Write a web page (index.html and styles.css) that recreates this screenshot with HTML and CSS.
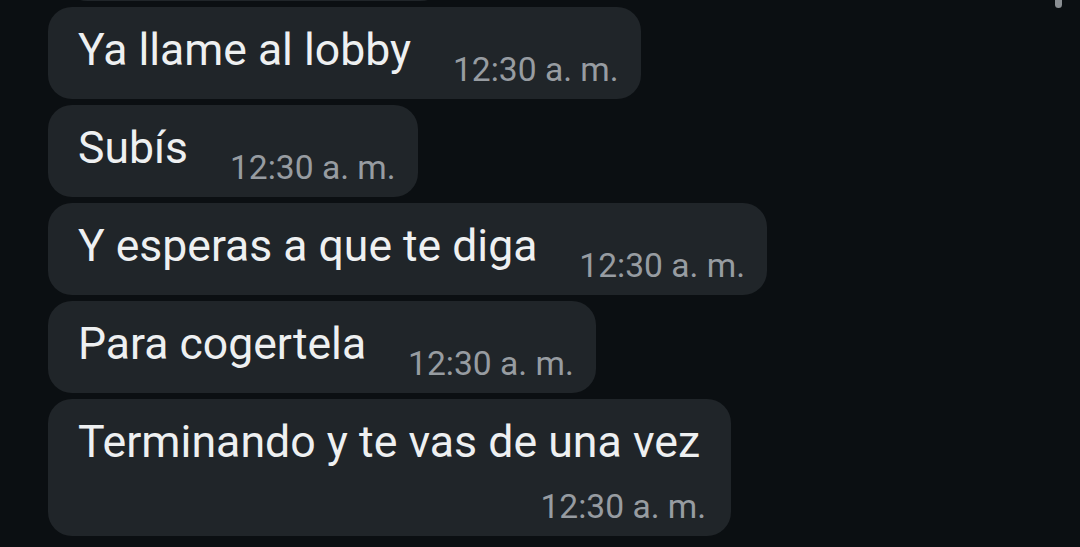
FILE: index.html
```html
<!DOCTYPE html>
<html lang="es">
<head>
  <meta charset="UTF-8">
  <meta name="viewport" content="width=device-width, initial-scale=1.0">
  <title>Chat</title>
  <link rel="stylesheet" href="styles.css">
</head>
<body>
  <div class="scroll-thumb"></div>

  <div class="chat">
    <div class="bubble bubble-cut"></div>

    <div class="bubble">
      <span class="msg">Ya llame al lobby</span>
      <span class="time">12:30 a. m.</span>
    </div>

    <div class="bubble">
      <span class="msg">Subís</span>
      <span class="time">12:30 a. m.</span>
    </div>

    <div class="bubble">
      <span class="msg">Y esperas a que te diga</span>
      <span class="time">12:30 a. m.</span>
    </div>

    <div class="bubble">
      <span class="msg">Para cogertela</span>
      <span class="time">12:30 a. m.</span>
    </div>

    <div class="bubble long">
      <span class="msg">Terminando y te vas de una vez</span>
      <span class="time">12:30 a. m.</span>
    </div>
  </div>
</body>
</html>
```

FILE: styles.css
```css
body {
  margin: 0;
  padding: 0;
  background: #0b0f12;
  font-family: Roboto, 'Noto Sans', sans-serif;
  overflow: hidden;
}

.scroll-thumb {
  position: absolute;
  top: -6px;
  left: 1055px;
  width: 7px;
  height: 14px;
  border-radius: 4px;
  background: #8a8e92;
}

.chat {
  display: flex;
  flex-direction: column;
  align-items: flex-start;
  gap: 6px;
  padding-left: 48px;
  margin-top: -91px;
}

.bubble {
  display: flex;
  align-items: flex-end;
  background: #202529;
  border-radius: 24px;
  padding: 17px 22px 9px 30px;
}

.bubble-cut {
  width: 330px;
  height: 66px;
  margin-left: 15px;
}

.msg {
  color: #eef0f1;
  font-size: 44.5px;
  line-height: 52px;
  margin-bottom: 14px;
  white-space: nowrap;
}

.time {
  color: #979ca1;
  font-size: 33.6px;
  line-height: 40px;
  margin-top: 5px;
  margin-left: 42px;
  white-space: nowrap;
}

.bubble.long {
  flex-direction: column;
  align-items: stretch;
  padding-right: 25px;
}

.bubble.long .msg {
  font-size: 44.7px;
  padding-right: 6px;
}

.bubble.long .time {
  align-self: flex-end;
  margin-left: 0;
}
```
